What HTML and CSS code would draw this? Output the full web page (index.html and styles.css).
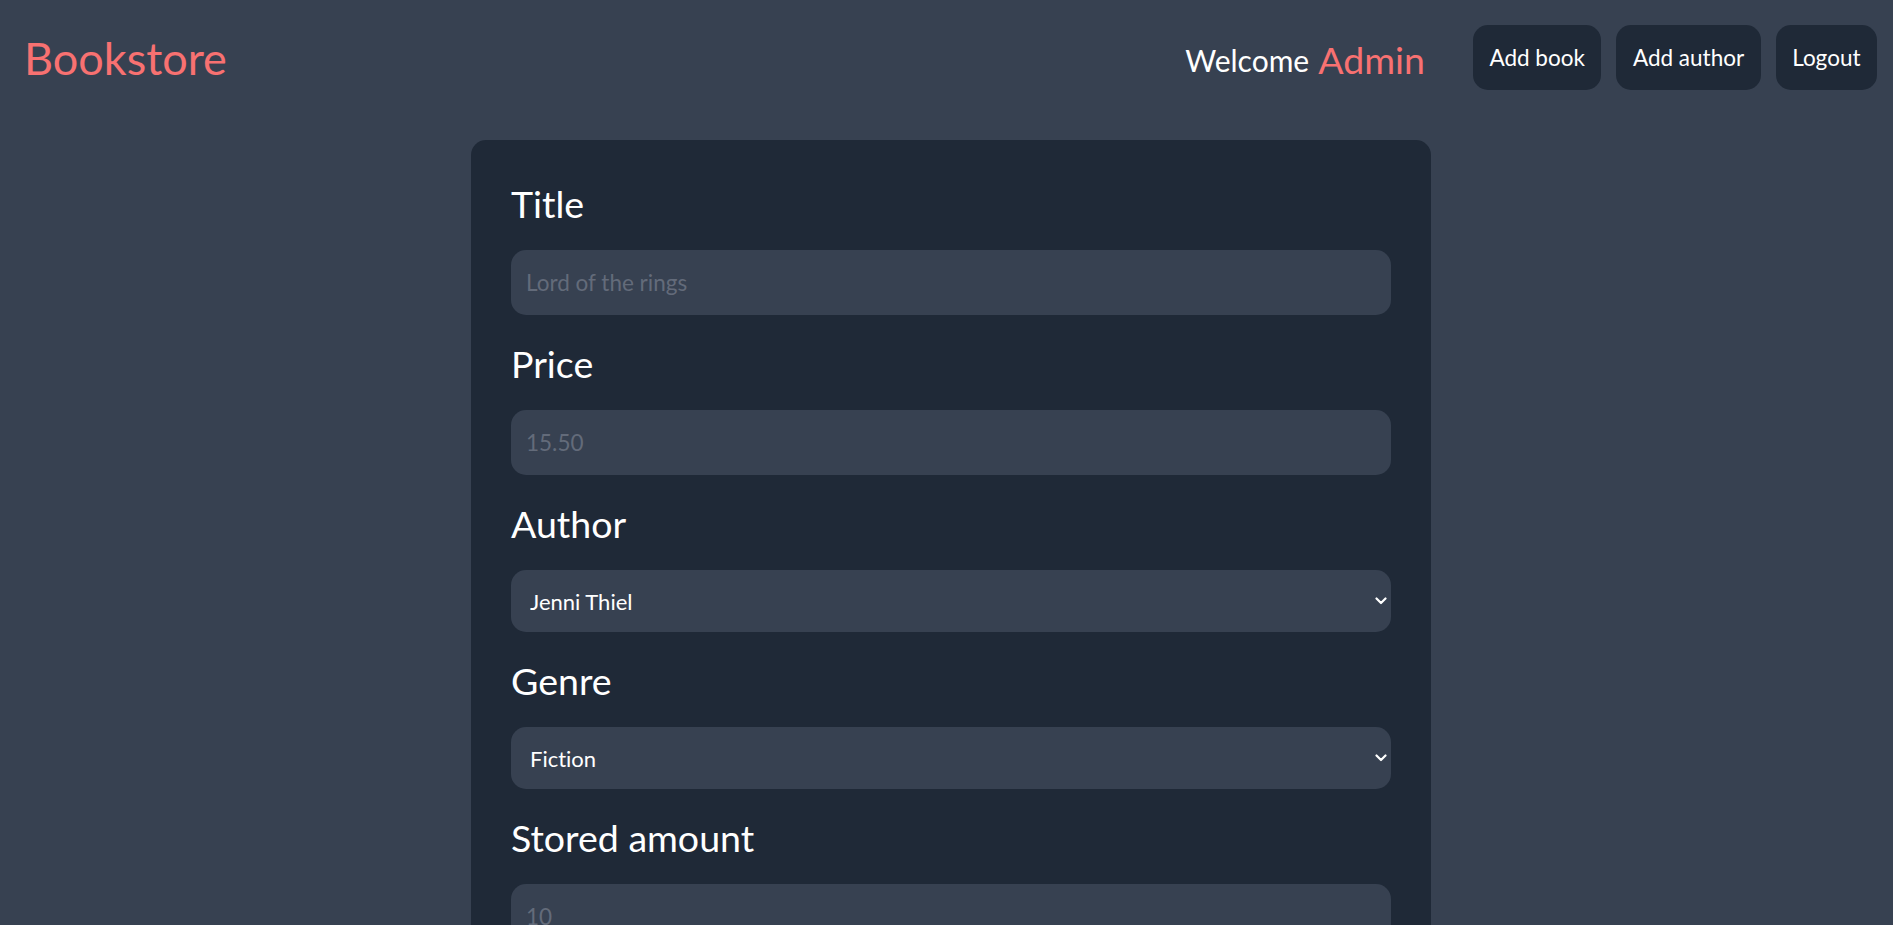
FILE: index.html
```html
<!DOCTYPE html>
<html lang="en">
<head>
<meta charset="utf-8">
<title>Bookstore</title>
<link rel="stylesheet" href="styles.css">
</head>
<body>
<header class="topbar">
  <h1 class="brand">Bookstore</h1>
  <nav class="nav">
    <div class="welcome"><span class="welcome-text">Welcome</span><span class="welcome-name">Admin</span></div>
    <a class="nav-btn" href="#">Add book</a>
    <a class="nav-btn" href="#">Add author</a>
    <a class="nav-btn" href="#">Logout</a>
  </nav>
</header>
<main class="page">
  <form class="card">
    <div class="field">
      <label class="field-label" for="title">Title</label>
      <input class="field-input" id="title" type="text" placeholder="Lord of the rings">
    </div>
    <div class="field">
      <label class="field-label" for="price">Price</label>
      <input class="field-input" id="price" type="text" placeholder="15.50">
    </div>
    <div class="field">
      <label class="field-label" for="author">Author</label>
      <div class="select-wrap">
        <select class="field-select" id="author">
          <option>Jenni Thiel</option>
        </select>
        <svg class="chevron" viewBox="0 0 12 8" width="12" height="8"><polyline points="1.5,1.5 6,6 10.5,1.5" fill="none" stroke="#ffffff" stroke-width="2.2" stroke-linecap="round" stroke-linejoin="round"/></svg>
      </div>
    </div>
    <div class="field">
      <label class="field-label" for="genre">Genre</label>
      <div class="select-wrap">
        <select class="field-select" id="genre">
          <option>Fiction</option>
        </select>
        <svg class="chevron" viewBox="0 0 12 8" width="12" height="8"><polyline points="1.5,1.5 6,6 10.5,1.5" fill="none" stroke="#ffffff" stroke-width="2.2" stroke-linecap="round" stroke-linejoin="round"/></svg>
      </div>
    </div>
    <div class="field">
      <label class="field-label" for="amount">Stored amount</label>
      <input class="field-input" id="amount" type="text" placeholder="10">
    </div>
  </form>
</main>
</body>
</html>
```
FILE: styles.css
```css
* { box-sizing: border-box; }
html, body { margin: 0; height: 100%; overflow: hidden; }
body {
  background: #374151;
  color: #ffffff;
  font-family: Lato, "Open Sans", sans-serif;
  font-variant-ligatures: none;
}
.topbar {
  display: flex;
  justify-content: space-between;
  align-items: center;
  padding: 25px 16px 25px 24px;
}
.brand {
  margin: 0;
  font-size: 45px;
  line-height: 50px;
  font-weight: 400;
  color: #f87171;
}
.nav {
  display: flex;
  align-items: center;
  gap: 15px;
}
.welcome {
  display: flex;
  align-items: center;
  gap: 9px;
  margin-right: 33px;
  padding-top: 4px;
}
.welcome-text { font-size: 30px; line-height: 40px; }
.welcome-name { font-size: 37.5px; line-height: 45px; color: #f87171; }
.nav-btn {
  background: #1f2937;
  color: #ffffff;
  font-size: 22.5px;
  line-height: 35px;
  padding: 15px 16.5px;
  border-radius: 15px;
  text-decoration: none;
}
.page {
  display: flex;
  justify-content: center;
  padding: 25px 0 0 9px;
}
.card {
  width: 960px;
  background: #1f2937;
  border-radius: 15px;
  padding: 40px;
  display: flex;
  flex-direction: column;
  gap: 25px;
}
.field {
  display: flex;
  flex-direction: column;
  gap: 25px;
}
.field-label {
  font-size: 37.5px;
  line-height: 45px;
  padding-top: 1px;
  margin-bottom: -1px;
}
.field-input, .field-select {
  width: 100%;
  border: none;
  outline: none;
  background: #374151;
  color: #ffffff;
  border-radius: 15px;
  font-family: inherit;
  font-variant-ligatures: none;
  margin: 0;
}
.field-input {
  height: 65px;
  padding: 0 15px;
  font-size: 22.5px;
}
.field-input::placeholder { color: #636b7a; }
.select-wrap { position: relative; }
.field-select {
  appearance: none;
  -webkit-appearance: none;
  height: 62px;
  padding: 0 19px;
  font-size: 22px;
}
.chevron {
  position: absolute;
  right: 4px;
  top: 27px;
  pointer-events: none;
}
```
